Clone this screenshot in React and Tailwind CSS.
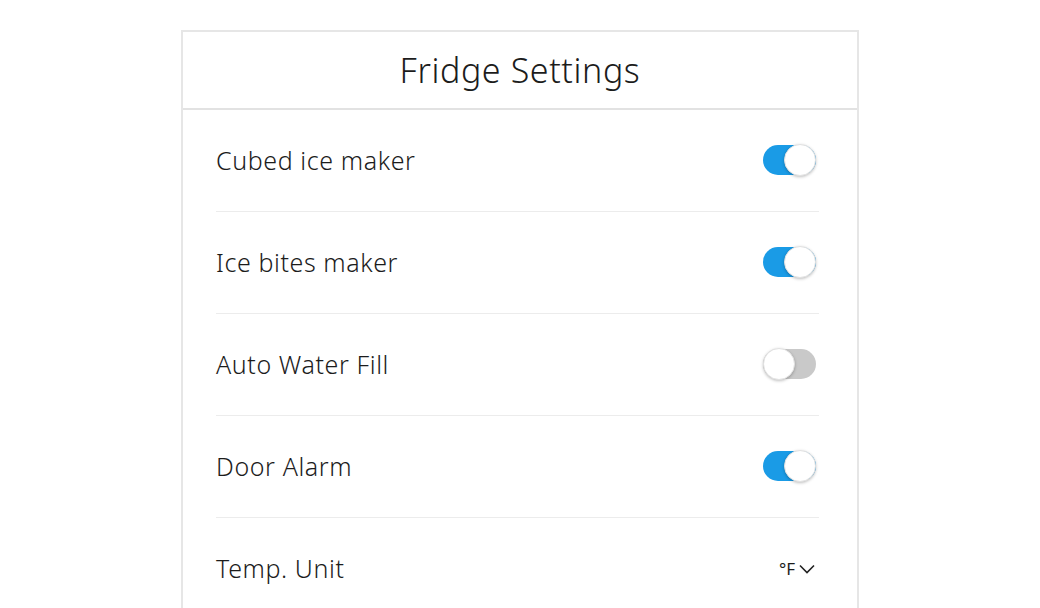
import React, { useState } from "react";

const Toggle = ({ on, onChange }) => (
  <button
    onClick={onChange}
    className={`relative block w-[53px] h-[30px] rounded-full transition-colors ${
      on ? "bg-[#1a9be6]" : "bg-[#c9c9c9]"
    }`}
    aria-pressed={on}
  >
    <span
      className={`absolute top-[-1px] w-[32px] h-[32px] rounded-full bg-white border border-[#e2e2e2] shadow-[0_1px_3px_rgba(0,0,0,0.25)] ${
        on ? "right-0" : "left-0"
      }`}
    ></span>
  </button>
);

const App = () => {
  const [settings, setSettings] = useState({
    cubed: true,
    bites: true,
    water: false,
    alarm: true,
  });

  const rows = [
    { key: "cubed", label: "Cubed ice maker" },
    { key: "bites", label: "Ice bites maker" },
    { key: "water", label: "Auto Water Fill" },
    { key: "alarm", label: "Door Alarm" },
  ];

  return (
    <div
      className="w-full h-[608px] overflow-hidden bg-white pt-[30px]"
      style={{ fontFamily: '"Noto Sans", "Open Sans", sans-serif' }}
    >
      <div className="ml-[181px] w-[678px] border-2 border-b-0 border-[#e6e6e6] min-h-[600px]">
        {/* Header */}
        <div className="h-[78px] flex items-center justify-center border-b-2 border-[#e2e2e2]">
          <h1 className="text-[34px] font-light tracking-[0.6px] text-[#1c1c1c]">
            Fridge Settings
          </h1>
        </div>

        {/* Rows */}
        <div className="pl-[33px] pr-[38px]">
          {rows.map((r) => (
            <div
              key={r.key}
              className="h-[102px] flex items-center justify-between border-b border-[#ececec]"
            >
              <span className="text-[25px] font-light tracking-[0.6px] text-[#1c1c1c]">
                {r.label}
              </span>
              <div className="flex pr-[3px] pb-[1px]">
                <Toggle
                  on={settings[r.key]}
                  onChange={() =>
                    setSettings((prev) => ({ ...prev, [r.key]: !prev[r.key] }))
                  }
                />
              </div>
            </div>
          ))}
          <div className="h-[102px] flex items-center justify-between">
            <span className="text-[25px] font-light tracking-[0.6px] text-[#1c1c1c]">
              Temp. Unit
            </span>
            <div className="flex items-center gap-[4px] pr-[4px] text-[#1c1c1c]">
              <span className="text-[17px]">°F</span>
              <svg width="16" height="10" viewBox="0 0 16 10" fill="none">
                <path
                  d="M1 1.5 L8 8.5 L15 1.5"
                  stroke="#222"
                  strokeWidth="1.6"
                />
              </svg>
            </div>
          </div>
        </div>
      </div>
    </div>
  );
};

export default App;
